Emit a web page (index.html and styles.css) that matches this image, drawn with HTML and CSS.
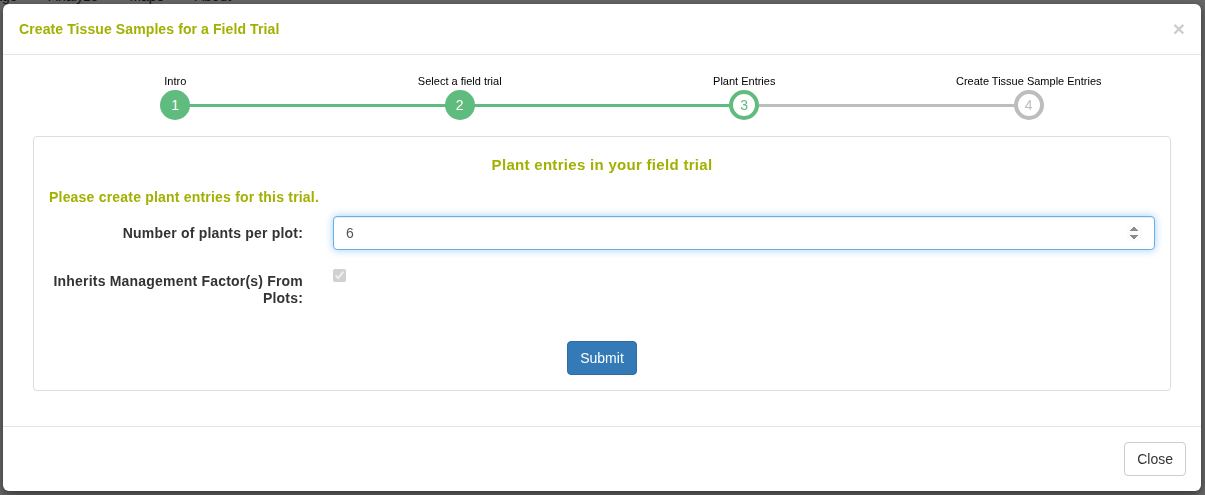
FILE: index.html
```html
<!DOCTYPE html>
<html>
<head>
<meta charset="utf-8">
<title>Create Tissue Samples</title>
<link rel="stylesheet" href="styles.css">
</head>
<body>
<nav class="topnav">
  <span class="nav-item first">Manage</span>
  <span class="nav-item">Analyze</span>
  <span class="nav-item">Maps</span>
  <span class="nav-item">About</span>
</nav>
<div class="backdrop"></div>
<div class="modal">
  <div class="modal-header">
    <h4 class="modal-title">Create Tissue Samples for a Field Trial</h4>
    <span class="close">&times;</span>
  </div>
  <div class="modal-body">
    <div class="stepper">
      <div class="step done first">
        <div class="step-label">Intro</div>
        <div class="step-track"><span class="circle">1</span></div>
      </div>
      <div class="step done">
        <div class="step-label">Select a field trial</div>
        <div class="step-track"><span class="circle">2</span></div>
      </div>
      <div class="step current">
        <div class="step-label">Plant Entries</div>
        <div class="step-track"><span class="circle">3</span></div>
      </div>
      <div class="step todo last">
        <div class="step-label">Create Tissue Sample Entries</div>
        <div class="step-track"><span class="circle">4</span></div>
      </div>
    </div>
    <div class="panel">
      <h3 class="panel-title">Plant entries in your field trial</h3>
      <p class="panel-lead">Please create plant entries for this trial.</p>
      <form class="form">
        <div class="form-row">
          <label class="form-label" for="nplants">Number of plants per plot:</label>
          <div class="form-field"><input id="nplants" class="form-input" type="number" value="6" autofocus></div>
        </div>
        <div class="form-row">
          <label class="form-label two-line" for="inherit">Inherits Management Factor(s) From Plots:</label>
          <div class="form-field"><input id="inherit" class="form-check" type="checkbox" checked disabled></div>
        </div>
        <div class="form-actions">
          <button type="button" class="btn btn-primary">Submit</button>
        </div>
      </form>
    </div>
  </div>
  <div class="modal-footer">
    <button type="button" class="btn btn-default">Close</button>
  </div>
</div>
</body>
</html>
```
FILE: styles.css
```css
* { box-sizing: border-box; }
html, body { margin: 0; padding: 0; }
body {
  font-family: "Liberation Sans", Arial, sans-serif;
  font-size: 14px;
  line-height: 20px;
  color: #333;
  background: #fff;
  height: 495px;
  overflow: hidden;
}
.topnav {
  display: flex;
  margin-top: -14px;
  margin-left: -33px;
  height: 20px;
  font-size: 14px;
  color: #333;
}
.nav-item { margin-right: 31px; }
.backdrop {
  position: fixed;
  inset: 0;
  background: rgba(0, 0, 0, 0.6);
}
.modal {
  position: fixed;
  left: 3px;
  top: 4px;
  width: 1198px;
  height: 487px;
  background: #fff;
  border-radius: 6px;
  box-shadow: 0 3px 9px rgba(0, 0, 0, 0.5);
  display: flex;
  flex-direction: column;
}
.modal-header {
  padding: 15px 15px 15px 16px;
  border-bottom: 1px solid #e5e5e5;
  display: flex;
  justify-content: space-between;
  align-items: center;
}
.modal-title {
  margin: 0;
  font-size: 14px;
  line-height: 20px;
  font-weight: bold;
  letter-spacing: 0.1px;
  color: #a2b000;
}
.close {
  font-size: 21px;
  font-weight: bold;
  color: #000;
  opacity: 0.2;
  line-height: 20px;
  margin-right: 1px;
}
.modal-body {
  padding: 15px 30px 0 30px;
  flex: 1;
}
.stepper {
  display: grid;
  grid-template-columns: repeat(4, 1fr);
  margin-bottom: 16px;
}
.step { text-align: center; }
.step-label {
  font-size: 11px;
  line-height: 14px;
  color: #000;
  margin-top: 4px;
  height: 16px;
}
.step-track {
  position: relative;
  height: 30px;
  display: flex;
  justify-content: center;
  align-items: center;
}
.step-track::before,
.step-track::after {
  content: "";
  position: absolute;
  top: 14px;
  height: 3px;
  width: 50%;
  background: #5fbb7e;
}
.step-track::before { left: 0; }
.step-track::after { right: 0; }
.first .step-track::before,
.last .step-track::after { display: none; }
.current .step-track::after,
.todo .step-track::before { background: #bdbdbd; }
.circle {
  position: relative;
  z-index: 1;
  width: 30px;
  height: 30px;
  border-radius: 50%;
  background: #5fbb7e;
  color: #fff;
  font-size: 14px;
  line-height: 30px;
  text-align: center;
}
.current .circle {
  background: #fff;
  border: 4px solid #5fbb7e;
  color: #5fbb7e;
  line-height: 22px;
}
.todo .circle {
  background: #fff;
  border: 4px solid #bdbdbd;
  color: #bdbdbd;
  line-height: 22px;
}
.panel {
  border: 1px solid #ddd;
  border-radius: 4px;
  padding: 15px 15px 15px 15px;
  margin-bottom: 35px;
}
.panel-title {
  margin: 3px 0 0;
  text-align: center;
  font-size: 15px;
  line-height: 20px;
  font-weight: bold;
  letter-spacing: 0.3px;
  color: #a2b000;
}
.panel-lead {
  margin: 12px 0 9px;
  font-size: 14px;
  font-weight: bold;
  letter-spacing: 0.2px;
  color: #a2b000;
}
.form-row {
  display: grid;
  grid-template-columns: 25% 75%;
  margin: 0 -15px 15px;
}
.form-label {
  padding: 7px 15px 0;
  text-align: right;
  font-weight: bold;
  letter-spacing: 0.2px;
  line-height: 20px;
}
.form-label.two-line { line-height: 17px; padding-top: 8px; }
.form-field { padding: 0 15px; }
.form-input {
  display: block;
  width: 100%;
  height: 34px;
  padding: 6px 12px;
  font-family: inherit;
  font-size: 14px;
  color: #555;
  background: #fff;
  border: 1px solid #66afe9;
  border-radius: 4px;
  outline: 0;
  box-shadow: inset 0 1px 1px rgba(0, 0, 0, 0.075), 0 0 8px rgba(102, 175, 233, 0.6);
}
.form-check {
  margin: 4px 0 0;
  width: 13px;
  height: 13px;
}
.form-actions {
  display: flex;
  justify-content: center;
  padding-top: 19px;
}
.btn {
  display: inline-block;
  height: 34px;
  padding: 6px 12px;
  font-family: inherit;
  font-size: 14px;
  line-height: 20px;
  border-radius: 4px;
  border: 1px solid transparent;
  cursor: pointer;
}
.btn-primary {
  background: #337ab7;
  border-color: #2e6da4;
  color: #fff;
}
.btn-default {
  background: #fff;
  border-color: #ccc;
  color: #333;
}
.modal-footer {
  padding: 15px 15px 15px;
  border-top: 1px solid #e5e5e5;
  display: flex;
  justify-content: flex-end;
}
```
